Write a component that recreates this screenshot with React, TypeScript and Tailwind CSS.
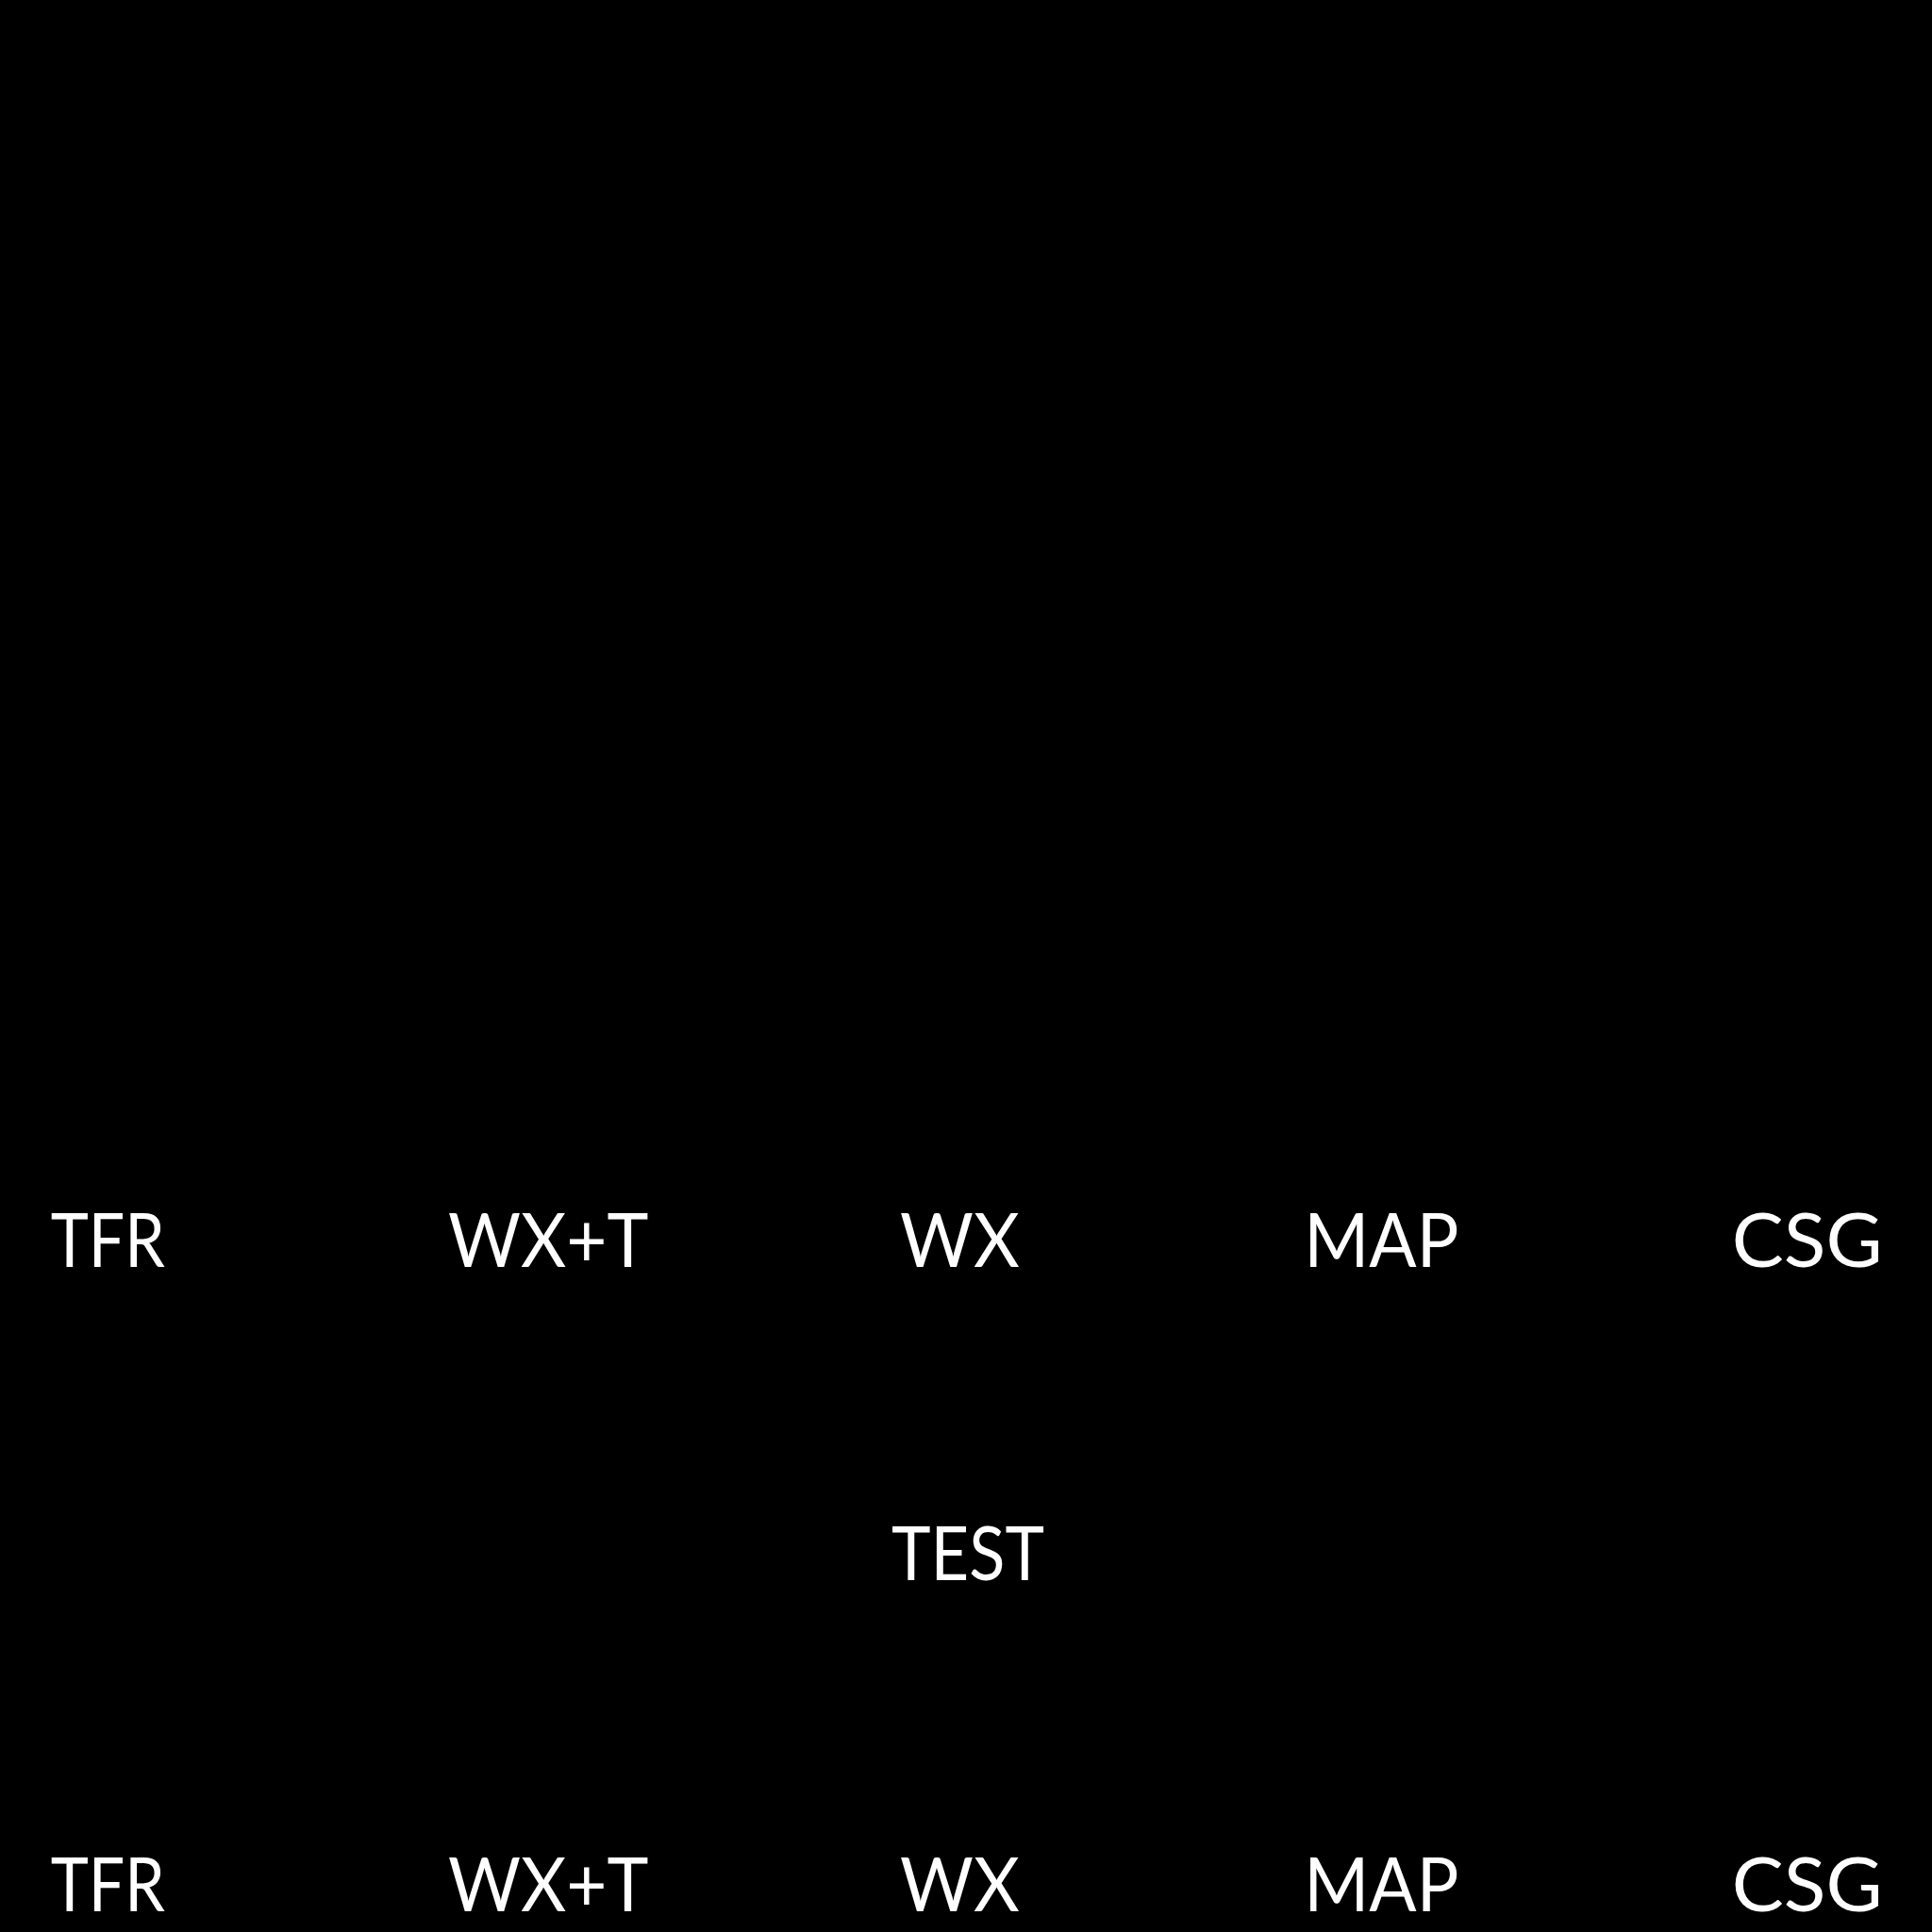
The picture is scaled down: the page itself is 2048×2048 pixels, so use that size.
import React from "react";

const labels: { t: string; c: string }[] = [
  { t: "TFR", c: "scale-x-[0.85]" },
  { t: "WX+T", c: "scale-x-[0.93]" },
  { t: "WX", c: "scale-x-[0.94]" },
  { t: "MAP", c: "scale-x-[0.93]" },
  { t: "CSG", c: "scale-x-[1.03]" },
];

function Row({ className }: { className: string }) {
  return (
    <div className={`grid grid-cols-[228px_706px_166px_728px_176px] h-[80px] ${className}`}>
      {labels.map((l) => (
        <div key={l.t} className="flex justify-center whitespace-nowrap">
          <span className={`inline-block ${l.c}`}>{l.t}</span>
        </div>
      ))}
    </div>
  );
}

export default function App() {
  return (
    <div
      className="w-[2048px] h-[2048px] bg-black text-white flex flex-col overflow-hidden text-[80px] leading-[80px]"
      style={{ fontFamily: "Lato, 'Noto Sans', sans-serif" }}
    >
      <Row className="mt-[1272px]" />
      <div className="mt-[252px] h-[80px] flex justify-center">
        <span className="inline-block ml-[4px] scale-x-[0.88]">TEST</span>
      </div>
      <Row className="mt-[271px]" />
    </div>
  );
}
